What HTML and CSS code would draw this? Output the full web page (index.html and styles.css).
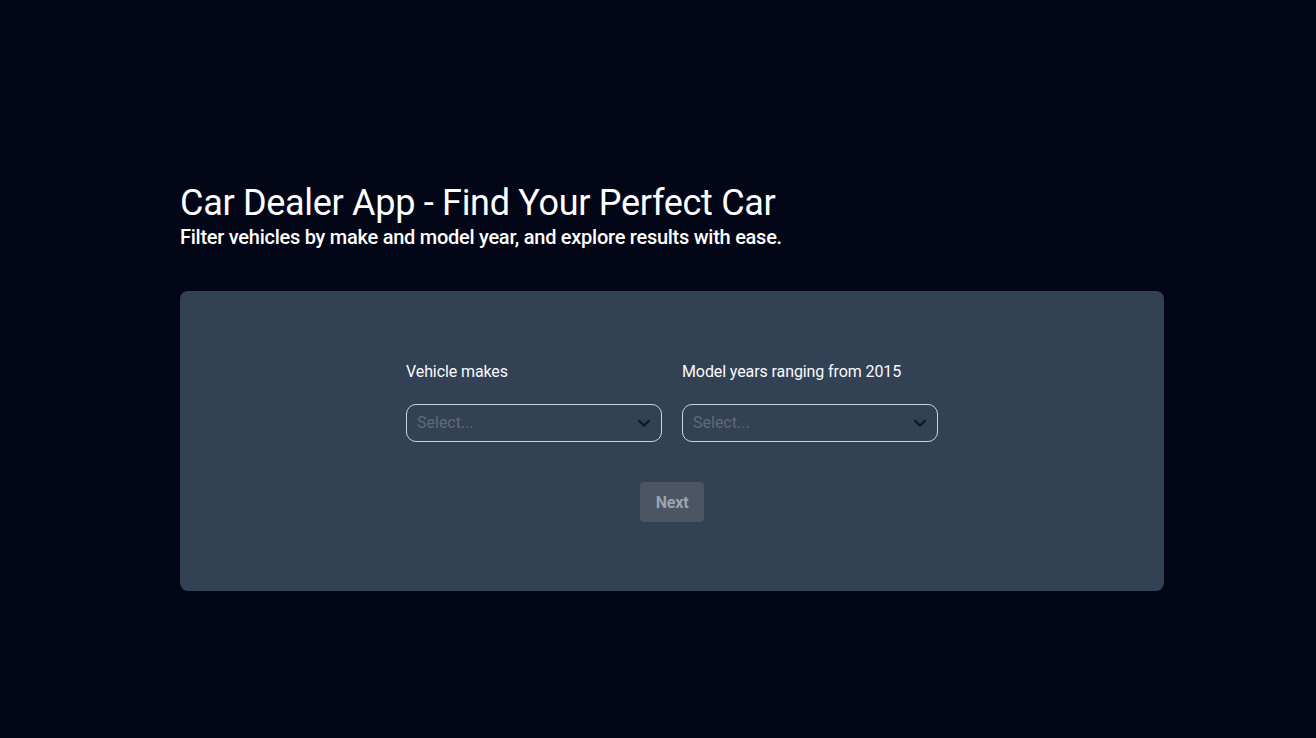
FILE: index.html
```html
<!DOCTYPE html>
<html lang="en">
<head>
<meta charset="utf-8">
<title>Car Dealer App</title>
<link rel="stylesheet" href="styles.css">
</head>
<body>
<main class="page">
  <header class="intro">
    <h1 class="title">Car Dealer App - Find Your Perfect Car</h1>
    <p class="subtitle">Filter vehicles by make and model year, and explore results with ease.</p>
  </header>
  <section class="card">
    <div class="fields">
      <div class="field">
        <label class="label">Vehicle makes</label>
        <div class="select">
          <span class="placeholder">Select...</span>
          <svg class="chevron" width="18" height="18" viewBox="0 0 24 24" fill="none" stroke="currentColor" stroke-width="3" stroke-linecap="round" stroke-linejoin="round"><path d="M5.5 9l6.5 6.5 6.5-6.5"/></svg>
        </div>
      </div>
      <div class="field">
        <label class="label">Model years ranging from 2015</label>
        <div class="select">
          <span class="placeholder">Select...</span>
          <svg class="chevron" width="18" height="18" viewBox="0 0 24 24" fill="none" stroke="currentColor" stroke-width="3" stroke-linecap="round" stroke-linejoin="round"><path d="M5.5 9l6.5 6.5 6.5-6.5"/></svg>
        </div>
      </div>
    </div>
    <button class="next" disabled>Next</button>
  </section>
</main>
</body>
</html>
```
FILE: styles.css
```css
* { box-sizing: border-box; }
html, body { margin: 0; padding: 0; }
body {
  background: #030617;
  font-family: Roboto, "Liberation Sans", sans-serif;
  color: #fff;
  min-height: 738px;
}
.page {
  width: 984px;
  margin-left: 180px;
  padding-top: 183px;
}
.intro { margin-bottom: 40px; }
.title {
  margin: 0;
  font-size: 36px;
  line-height: 40px;
  font-weight: 400;
  letter-spacing: -0.3px;
}
.subtitle {
  margin: 0;
  font-size: 20px;
  line-height: 28px;
  font-weight: 500;
  letter-spacing: -0.26px;
}
.card {
  background: #334155;
  border-radius: 8px;
  height: 300px;
  display: flex;
  flex-direction: column;
  align-items: center;
  justify-content: center;
  gap: 40px;
}
.fields { display: flex; gap: 20px; }
.field { width: 256px; display: flex; flex-direction: column; gap: 20px; }
.label { font-size: 16px; line-height: 24px; color: #f8fafc; letter-spacing: -0.1px; }
.select {
  height: 38px;
  border: 1px solid #cbd5e1;
  border-radius: 10px;
  display: flex;
  align-items: center;
  justify-content: space-between;
  padding: 0 8px 1px 10px;
}
.placeholder { color: #5f6a7a; font-size: 16px; }
.chevron { color: #111827; }
.next {
  width: 64px;
  height: 40px;
  border: none;
  border-radius: 4px;
  background: #4b5563;
  color: #9ca3af;
  font-family: inherit;
  font-size: 16px;
  font-weight: 700;
  letter-spacing: -0.2px;
}
```
